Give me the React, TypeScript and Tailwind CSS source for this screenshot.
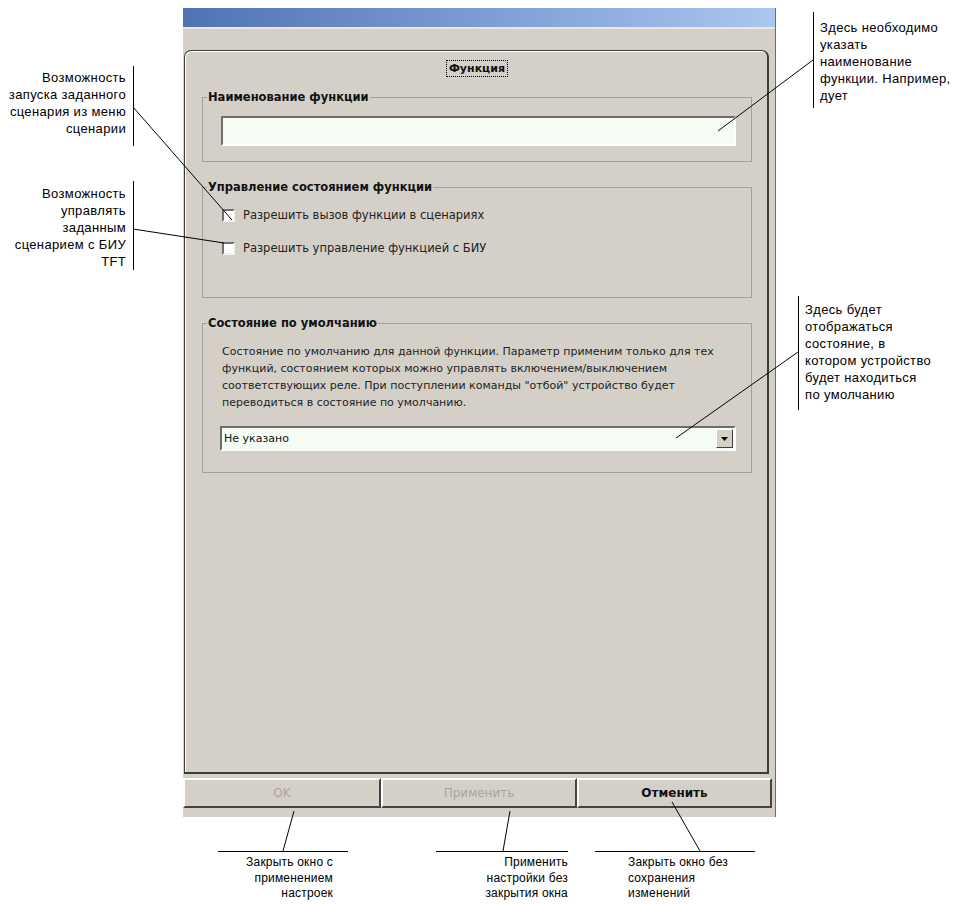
import type { ReactNode } from "react";

const dialogFont = "font-['DejaVu_Sans','Liberation_Sans',sans-serif]";

function GroupBox({ title, children, className = "" }: { title: string; children: ReactNode; className?: string }) {
  return (
    <fieldset className={`border border-[#a3a099] ${className}`}>
      <legend className="ml-[4px] px-[1px] text-[11.5px] font-bold leading-[16px] text-[#111]">{title}</legend>
      {children}
    </fieldset>
  );
}

function Checkbox({ label }: { label: string }) {
  return (
    <div className="flex h-[16px] items-center gap-[8px]">
      <span className="h-[13px] w-[13px] border-2 border-t-[#707070] border-l-[#707070] border-b-[#f2f2f2] border-r-[#f2f2f2] bg-white" />
      <span className="text-[11.5px] leading-[16px] text-[#222]">{label}</span>
    </div>
  );
}

function DialogButton({ label, disabled, className = "" }: { label: string; disabled?: boolean; className?: string }) {
  return (
    <div
      className={`flex h-[30px] items-center justify-center border-2 border-t-white border-l-white border-b-[#45443f] border-r-[#45443f] text-[12px] ${
        disabled ? "text-[#a8a6a0]" : "font-bold text-[#111]"
      } ${className}`}
    >
      {label}
    </div>
  );
}

function Window() {
  return (
    <div className={`mt-[8px] flex h-[809px] w-[593px] flex-col border-r border-[#6e6c68] bg-[#d4d0c8] ${dialogFont}`}>
      <div className="h-[19px] bg-gradient-to-r from-[#5073b4] via-[#7d9cd4] to-[#a9c7ef]" />
      <div className="h-[23px] border-t-2 border-[#ebe7dd]" />

      {/* tab page */}
      <div className="ml-[1px] mr-[6px] flex h-[724px] flex-col rounded-t-[7px] border border-r-2 border-b-2 border-[#3c3c3c] pl-[17px] pr-[15px] shadow-[inset_1px_1px_0_#fff]">
        <div className="mx-auto mt-[9px] w-fit border border-dotted border-black px-[2px] text-[11px] font-bold leading-[15px] text-[#111]">
          Функция
        </div>

        <GroupBox title="Наименование функции" className="mt-[12px]">
          <div className="pb-[15px] pl-[18px] pr-[15px] pt-[11px]">
            <div className="h-[30px] border-2 border-t-[#6f6d68] border-l-[#6f6d68] border-b-white border-r-white bg-[#f5fcf3]" />
          </div>
        </GroupBox>

        <GroupBox title="Управление состоянием функции" className="mt-[17px]">
          <div className="flex flex-col gap-[17px] pb-[41px] pl-[19px] pt-[12px]">
            <Checkbox label="Разрешить вызов функции в сценариях" />
            <Checkbox label="Разрешить управление функцией с БИУ" />
          </div>
        </GroupBox>

        <GroupBox title="Состояние по умолчанию" className="mt-[17px]">
          <div className="pb-[21px] pl-[17px] pr-[15px] pt-[12px]">
            <p className="whitespace-nowrap pl-[2px] text-[11px] leading-[17px] text-[#222]">
              Состояние по умолчанию для данной функции. Параметр применим только для тех
              <br />
              функций, состоянием которых можно управлять включением/выключением
              <br />
              соответствующих реле. При поступлении команды "отбой" устройство будет
              <br />
              переводиться в состояние по умолчанию.
            </p>
            <div className="mt-[15px] flex h-[25px] items-center border-2 border-t-[#6f6d68] border-l-[#6f6d68] border-b-white border-r-white bg-[#f5fcf3] pl-[2px] pr-[1px]">
              <span className="flex-1 text-[11px] text-[#111]">Не указано</span>
              <span className="flex h-[19px] w-[17px] items-center justify-center border border-t-white border-l-white border-b-[#404040] border-r-[#404040] bg-[#d4d0c8]">
                <svg width="7" height="4" viewBox="0 0 7 4">
                  <path d="M0 0h7L3.5 4z" fill="#000" />
                </svg>
              </span>
            </div>
          </div>
        </GroupBox>
      </div>

      <div className="mt-[4px] flex">
        <DialogButton label="OK" disabled className="w-[198px]" />
        <DialogButton label="Применить" disabled className="w-[196px]" />
        <DialogButton label="Отменить" className="w-[195px]" />
      </div>
    </div>
  );
}

export default function App() {
  return (
    <div className="relative h-[906px] w-[954px] overflow-hidden bg-white font-['Liberation_Sans',Arial,sans-serif] text-[13px] leading-[17px] tracking-[0.35px] text-black">
      <div className="flex">
        {/* left callouts */}
        <div className="flex w-[183px] flex-col">
          <div className="mt-[66px] h-[80px] w-[134px] whitespace-nowrap border-r border-black pr-[7px] pt-[3px] text-right">
            Возможность
            <br />
            запуска заданного
            <br />
            сценария из меню
            <br />
            сценарии
          </div>
          <div className="mt-[35px] h-[89px] w-[134px] whitespace-nowrap border-r border-black pr-[7px] pt-[4px] text-right">
            Возможность
            <br />
            управлять
            <br />
            заданным
            <br />
            сценарием с БИУ
            <br />
            TFT
          </div>
        </div>

        <div className="tracking-normal">
          <Window />
        </div>

        {/* right callouts */}
        <div className="flex flex-1 flex-col whitespace-nowrap">
          <div className="ml-[37px] mt-[12px] h-[96px] border-l border-black pl-[6px] pt-[7px]">
            Здесь необходимо
            <br />
            указать
            <br />
            наименование
            <br />
            функции. Например,
            <br />
            дует
          </div>
          <div className="ml-[22px] mt-[188px] h-[114px] border-l border-black pl-[6px] pt-[5px]">
            Здесь будет
            <br />
            отображаться
            <br />
            состояние, в
            <br />
            котором устройство
            <br />
            будет находиться
            <br />
            по умолчанию
          </div>
        </div>
      </div>

      {/* bottom callouts */}
      <div className="mt-[34px] flex whitespace-nowrap text-[12px] leading-[15.5px] tracking-[0.2px]">
        <div className="ml-[218px] w-[130px] border-t border-black pr-[15px] pt-[3px] text-right">
          Закрыть окно с
          <br />
          применением
          <br />
          настроек
        </div>
        <div className="ml-[88px] w-[132px] border-t border-black pt-[3px] text-right">
          Применить
          <br />
          настройки без
          <br />
          закрытия окна
        </div>
        <div className="ml-[27px] w-[160px] border-t border-black pl-[33px] pt-[3px]">
          Закрыть окно без
          <br />
          сохранения
          <br />
          изменений
        </div>
      </div>

      {/* leader lines */}
      <svg className="pointer-events-none absolute inset-0" width="954" height="906" viewBox="0 0 954 906">
        <g stroke="#000" strokeWidth="1" fill="none">
          <path d="M133 107L232 220" />
          <path d="M133 229L224 243" />
          <path d="M813 60L718 131" />
          <path d="M798 352L676 438" />
          <path d="M294 811L283 851" />
          <path d="M510 811L503 851" />
          <path d="M672 802L700 851" />
        </g>
      </svg>
    </div>
  );
}
